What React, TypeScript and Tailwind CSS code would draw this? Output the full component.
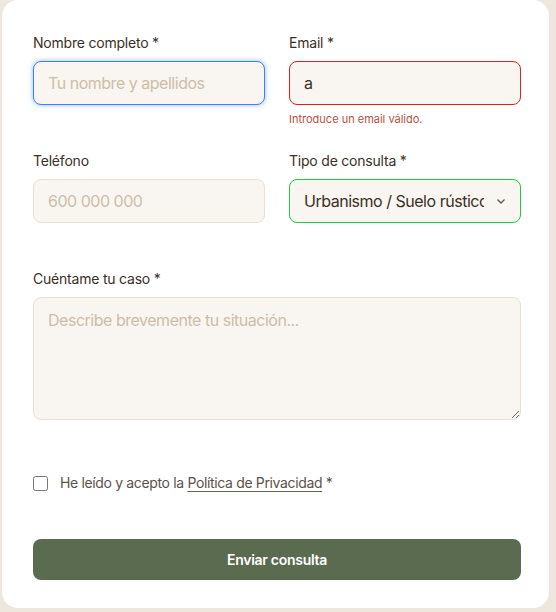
import React from "react";

const labelCls = "block text-[14px] leading-5 tracking-[-0.015em] text-[#3b2f28] mb-2";
const fieldCls =
  "w-full h-[44px] rounded-[8px] border bg-[#f9f6f1] px-[14px] text-[16px] tracking-[-0.03em] text-[#3b2f28] placeholder:text-[#cdbda8] outline-none";

export default function App() {
  return (
    <div
      className="min-h-[612px] w-[556px] bg-[#ede7dd] overflow-hidden"
      style={{ fontFamily: "Inter, 'Noto Sans', sans-serif" }}
    >
      <div className="ml-[2px] w-[547px] h-[608px] rounded-[16px] bg-white pt-[33px] pl-[31px] pr-[28px]">
        <form className="flex flex-col" onSubmit={(e) => e.preventDefault()}>
          <div className="grid grid-cols-2 gap-x-6 gap-y-[24px]">
            <div>
              <label className={labelCls}>Nombre completo *</label>
              <input
                className={`${fieldCls} border-[#3b82f6] shadow-[0_0_5px_rgba(59,130,246,0.55)]`}
                placeholder="Tu nombre y apellidos"
              />
            </div>
            <div>
              <label className={labelCls}>Email *</label>
              <input className={`${fieldCls} border-[#e0201c]`} defaultValue="a" />
              <p className="mt-[6px] text-[11px] leading-4 text-[#b9503f]">
                Introduce un email válido.
              </p>
            </div>
            <div>
              <label className={labelCls}>Teléfono</label>
              <input className={`${fieldCls} border-[#e9e0d2]`} placeholder="600 000 000" />
            </div>
            <div>
              <label className={labelCls}>Tipo de consulta *</label>
              <div className="relative">
                <div
                  className={`${fieldCls} border-[#1fcc45] flex items-center pr-[36px] overflow-hidden whitespace-nowrap`}
                >
                  <span className="overflow-hidden">Urbanismo / Suelo rústico</span>
                </div>
                <svg
                  className="absolute right-[14px] top-1/2 -translate-y-1/2"
                  width="12"
                  height="12"
                  viewBox="0 0 12 12"
                  fill="none"
                  stroke="#5a5350"
                  strokeWidth="1.3"
                >
                  <path d="M2.5 4.5 6 8l3.5-3.5" />
                </svg>
              </div>
            </div>
          </div>

          <div className="mt-[46px]">
            <label className={labelCls}>Cuéntame tu caso *</label>
            <textarea
              className="block w-full h-[123px] resize-y rounded-[8px] border border-[#e9e0d2] bg-[#f9f6f1] px-[14px] py-[10px] text-[16px] leading-6 tracking-[-0.03em] text-[#3b2f28] placeholder:text-[#cdbda8] outline-none"
              placeholder="Describe brevemente tu situación..."
            />
          </div>

          <label className="mt-[53px] flex items-center gap-3 text-[14px] leading-5 tracking-[-0.025em] text-[#5b524c]">
            <input type="checkbox" className="w-[15px] h-[15px] m-0" />
            <span>
              He leído y acepto la{" "}
              <a
                href="#"
                className="underline decoration-[#5b6b4f] underline-offset-[3px] text-[#5b524c]"
              >
                Política de Privacidad
              </a>{" "}
              *
            </span>
          </label>

          <button
            type="submit"
            className="mt-[46px] h-[41px] w-full rounded-[8px] bg-[#5b6b4f] text-[14px] font-semibold tracking-[-0.02em] text-white"
          >
            Enviar consulta
          </button>
        </form>
      </div>
    </div>
  );
}
